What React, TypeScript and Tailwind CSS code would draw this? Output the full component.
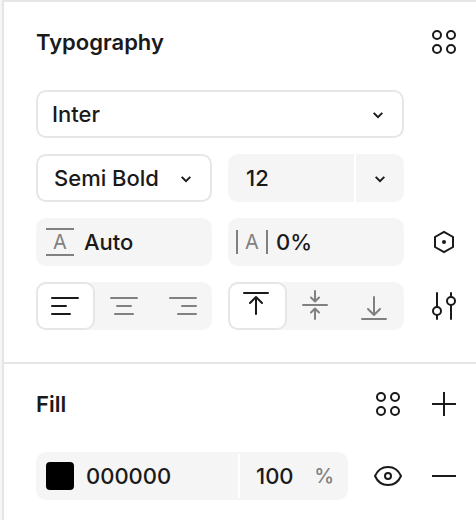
import { useState, ReactNode } from 'react';
import clsx from 'clsx';

type IconProps = { className?: string };

const stroke = {
    fill: 'none',
    stroke: 'currentColor',
    strokeWidth: 2,
    'aria-hidden': true,
} as const;

function StylesIcon() {
    return (
        <svg viewBox="0 0 24 24" className="size-6" {...stroke}>
            <circle cx="5" cy="5" r="4" />
            <circle cx="19" cy="5" r="4" />
            <circle cx="5" cy="19" r="4" />
            <circle cx="19" cy="19" r="4" />
        </svg>
    );
}

function ChevronIcon({ className }: IconProps) {
    return (
        <svg viewBox="0 0 12 8" className={clsx('h-2 w-3', className)} {...stroke}>
            <path d="M1.7 1.9 6 6.1l4.3-4.2" />
        </svg>
    );
}

function TextAlignIcon({ d }: { d: string }) {
    return (
        <svg viewBox="0 0 28 18" className="h-[18px] w-7" {...stroke} strokeLinecap="round">
            <path d={d} />
        </svg>
    );
}

function VerticalAlignIcon({ d }: { d: string }) {
    return (
        <svg viewBox="0 0 28 32" className="h-8 w-7" {...stroke} strokeLinecap="round" strokeLinejoin="round">
            <path d={d} />
        </svg>
    );
}

function VariableIcon() {
    return (
        <svg viewBox="0 0 24 24" className="size-6" {...stroke}>
            <path d="M12 1.8 21 7v10l-9 5.2L3 17V7z" />
            <circle cx="12" cy="12" r="2" fill="currentColor" stroke="none" />
        </svg>
    );
}

function SettingsIcon() {
    return (
        <svg viewBox="0 0 24 28" className="h-7 w-6" {...stroke} strokeLinecap="round">
            <path d="M5 1v13.5M5 23.5V27M19 1v3.5M19 13.5V27" />
            <circle cx="5" cy="19" r="4" />
            <circle cx="19" cy="9" r="4" />
        </svg>
    );
}

function EyeIcon() {
    return (
        <svg viewBox="0 0 28 20" className="h-5 w-7" {...stroke}>
            <path d="M1 10C3.4 4.6 8.3 1 14 1s10.6 3.6 13 9c-2.4 5.4-7.3 9-13 9S3.4 15.4 1 10z" />
            <circle cx="14" cy="10" r="3" />
        </svg>
    );
}

function PlusIcon() {
    return (
        <svg viewBox="0 0 24 24" className="size-6" {...stroke}>
            <path d="M12 0v24M0 12h24" />
        </svg>
    );
}

function MinusIcon() {
    return (
        <svg viewBox="0 0 24 24" className="size-6" {...stroke}>
            <path d="M0 12h24" />
        </svg>
    );
}

const horizontal = [
    { value: 'left', label: 'Align left', d: 'M1 1h26M1 9h14M1 17h18' },
    { value: 'center', label: 'Align center', d: 'M1 1h26M7 9h14M5 17h18' },
    { value: 'right', label: 'Align right', d: 'M1 1h26M13 9h14M9 17h18' },
];

const vertical = [
    { value: 'top', label: 'Align top', d: 'M1 3h24M13 24V7M7 13l6-6 6 6' },
    {
        value: 'middle',
        label: 'Align middle',
        d: 'M1 15h24M13 1v10M9 7.5l4 4 4-4M13 29V19M9 22.5l4-4 4 4',
    },
    { value: 'bottom', label: 'Align bottom', d: 'M1 29h24M13 7v18M7 19l6 6 6-6' },
];

function IconButton({ label, children }: { label: string; children: ReactNode }) {
    return (
        <button
            type="button"
            aria-label={label}
            className="flex h-12 w-10 shrink-0 items-center justify-center rounded-lg"
        >
            {children}
        </button>
    );
}

function Dropdown({ label, options, className }: { label: string; options: string[]; className: string }) {
    return (
        <div className="relative min-w-0">
            <select
                aria-label={label}
                className={clsx(
                    'block h-12 w-full appearance-none rounded-[10px] border-2 border-[#e6e6e6] bg-white outline-none',
                    className
                )}
            >
                {options.map((option) => (
                    <option key={option}>{option}</option>
                ))}
            </select>
            <ChevronIcon className="pointer-events-none absolute top-[21px] right-5" />
        </div>
    );
}

type SegmentedProps = {
    name: string;
    items: { value: string; label: string; d: string }[];
    icon: (props: { d: string }) => ReactNode;
};

function Segmented({ name, items, icon: Icon }: SegmentedProps) {
    const [active, setActive] = useState(items[0].value);

    return (
        <div role="radiogroup" aria-label={name} className="grid h-12 min-w-0 grid-cols-3 rounded-[10px] bg-[#f5f5f5]">
            {items.map((item) => (
                <label
                    key={item.value}
                    className={clsx(
                        'flex items-center justify-center rounded-[10px] border-2',
                        active === item.value
                            ? 'border-[#e6e6e6] bg-white text-[#1a1a1a]'
                            : 'border-transparent text-[#808080]'
                    )}
                >
                    <input
                        type="radio"
                        name={name}
                        aria-label={item.label}
                        checked={active === item.value}
                        onChange={() => setActive(item.value)}
                        className="sr-only"
                    />
                    <Icon d={item.d} />
                </label>
            ))}
        </div>
    );
}

function TypographySection() {
    return (
        <section className="border-b-2 border-[#e6e6e6] pt-4 pr-3 pb-8 pl-8">
            <div className="mb-6 flex h-12 items-center justify-between">
                <h2 className="font-semibold">Typography</h2>
                <IconButton label="Text styles">
                    <StylesIcon />
                </IconButton>
            </div>

            <div className="grid grid-cols-[1fr_40px] gap-x-5 gap-y-4">
                <Dropdown label="Font family" options={['Inter', 'Roboto', 'Lato']} className="pl-[14px]" />
                <span />

                <div className="grid grid-cols-2 gap-4">
                    <Dropdown
                        label="Font weight"
                        options={['Semi Bold', 'Regular', 'Medium', 'Bold']}
                        className="pl-4"
                    />
                    <div className="flex h-12 min-w-0 gap-0.5">
                        <input
                            aria-label="Font size"
                            defaultValue="12"
                            className="w-0 min-w-0 flex-1 rounded-l-[10px] bg-[#f5f5f5] pl-[18px] outline-none"
                        />
                        <button
                            type="button"
                            aria-label="Font size presets"
                            className="flex w-12 items-center justify-center rounded-r-[10px] bg-[#f5f5f5]"
                        >
                            <ChevronIcon className="mt-0.5" />
                        </button>
                    </div>
                </div>
                <span />

                <div className="grid grid-cols-2 gap-4">
                    <label className="flex h-12 min-w-0 items-center gap-[10px] rounded-[10px] bg-[#f5f5f5] pl-[10px]">
                        <span
                            aria-hidden
                            className="flex h-7 w-7 shrink-0 items-center justify-center border-y-2 border-[#808080] text-xl font-normal text-[#808080]"
                        >
                            A
                        </span>
                        <input aria-label="Line height" defaultValue="Auto" className="w-full min-w-0 outline-none" />
                    </label>
                    <label className="flex h-12 min-w-0 items-center gap-2 rounded-[10px] bg-[#f5f5f5] pl-2">
                        <span
                            aria-hidden
                            className="flex h-6 w-8 shrink-0 items-center justify-center border-x-2 border-[#808080] text-xl font-normal text-[#808080]"
                        >
                            A
                        </span>
                        <input aria-label="Letter spacing" defaultValue="0%" className="w-full min-w-0 outline-none" />
                    </label>
                </div>
                <IconButton label="Apply variable">
                    <VariableIcon />
                </IconButton>

                <div className="grid grid-cols-2 gap-4">
                    <Segmented name="Horizontal alignment" items={horizontal} icon={TextAlignIcon} />
                    <Segmented name="Vertical alignment" items={vertical} icon={VerticalAlignIcon} />
                </div>
                <IconButton label="Type settings">
                    <SettingsIcon />
                </IconButton>
            </div>
        </section>
    );
}

function FillSection() {
    return (
        <section className="pt-4 pr-3 pb-5 pl-8">
            <div className="mb-6 flex h-12 items-center gap-4">
                <h2 className="flex-1 font-semibold">Fill</h2>
                <IconButton label="Fill styles">
                    <StylesIcon />
                </IconButton>
                <IconButton label="Add fill">
                    <PlusIcon />
                </IconButton>
            </div>

            <div className="flex items-center gap-4">
                <div className="mr-1 flex h-12 min-w-0 flex-1 items-center rounded-[10px] bg-[#f5f5f5] pl-[10px]">
                    <button type="button" aria-label="Fill color" className="size-7 shrink-0 rounded bg-black" />
                    <input
                        aria-label="Hex value"
                        defaultValue="000000"
                        className="w-0 min-w-0 flex-1 pl-3 outline-none"
                    />
                    <label className="flex h-11 w-[110px] items-center border-l-2 border-white pr-[14px] pl-4">
                        <input aria-label="Opacity" defaultValue="100" className="w-0 min-w-0 flex-1 outline-none" />
                        <span className="text-xl text-[#808080]">%</span>
                    </label>
                </div>
                <IconButton label="Toggle visibility">
                    <EyeIcon />
                </IconButton>
                <IconButton label="Remove fill">
                    <MinusIcon />
                </IconButton>
            </div>
        </section>
    );
}

export default function App() {
    return (
        <div className="min-h-screen bg-[#f5f5f5] pl-0.5 font-['Inter',sans-serif] text-[22px] leading-8 font-medium text-[#1a1a1a]">
            <main className="min-h-screen border-t-2 border-l-2 border-[#e6e6e6] bg-white">
                <TypographySection />
                <FillSection />
            </main>
        </div>
    );
}
